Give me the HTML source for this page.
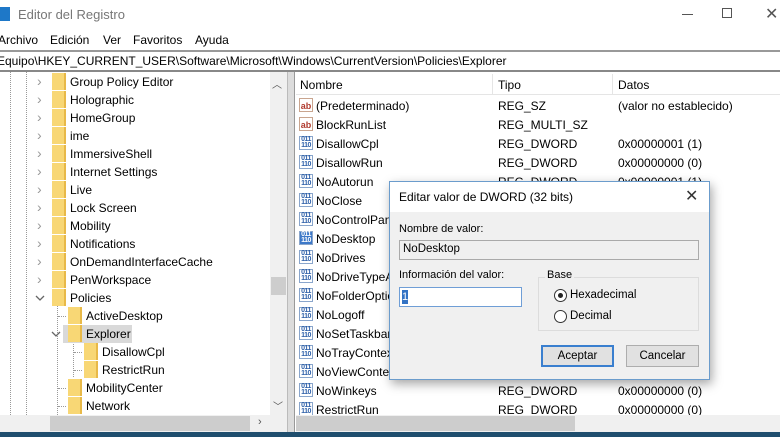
<!DOCTYPE html><html><head><style>
*{margin:0;padding:0;box-sizing:border-box}
body{width:780px;height:437px;overflow:hidden;background:#fff;font-family:"Liberation Sans",sans-serif;font-size:12px;color:#000;position:relative}
.a{position:absolute;white-space:nowrap}
.fold{position:absolute;width:14px;height:17px;background:#f8d775;border-right:2px solid #e8b948}
.chev{position:absolute;font-size:14px;color:#999}
.ic{position:absolute;width:14px;height:14px;font-size:9px;line-height:14px;text-align:center;font-weight:bold}
.ab{color:#b03a2e;border:1px solid #c9a58f;background:#fff}
.dw{color:#2d5fa8;border:1px solid #8aa6cc;background:#fff;font-size:7px;line-height:6px;letter-spacing:-0.5px}
</style></head><body>
<div class="a" style="left:0;top:7px;width:10px;height:14px;background:#1e78c8"></div>
<div class="a" style="left:18px;top:7px;font-size:13px;color:#777">Editor del Registro</div>
<div class="a" style="left:682px;top:14px;width:11px;height:1px;background:#555"></div>
<div class="a" style="left:722px;top:8px;width:10px;height:10px;border:1px solid #555"></div>
<div class="a" style="left:765px;top:4px;font-size:16px;color:#555">✕</div>
<div class="a" style="left:-2px;top:33px">Archivo</div>
<div class="a" style="left:50px;top:33px">Edición</div>
<div class="a" style="left:103px;top:33px">Ver</div>
<div class="a" style="left:133px;top:33px">Favoritos</div>
<div class="a" style="left:195px;top:33px">Ayuda</div>
<div class="a" style="left:0;top:50px;width:780px;height:2px;background:#999"></div>
<div class="a" style="left:-3px;top:54px;font-size:12px">Equipo\HKEY_CURRENT_USER\Software\Microsoft\Windows\CurrentVersion\Policies\Explorer</div>
<div class="a" style="left:0;top:70px;width:780px;height:2px;background:#888"></div>
<div class="a" style="left:10px;top:72px;height:343px;border-left:1px dotted #999"></div>
<div class="a" style="left:26px;top:72px;height:343px;border-left:1px dotted #999"></div>
<div class="a" style="left:57px;top:305px;height:110px;border-left:1px dotted #999"></div>
<div class="a" style="left:73px;top:341px;height:36px;border-left:1px dotted #999"></div>
<div id="tree"></div>
<div class="a" style="left:270px;top:72px;width:17px;height:343px;background:#f0f0f0"></div>
<div class="a" style="left:272px;top:76px;font-size:10px;color:#555">︿</div>
<div class="a" style="left:271px;top:277px;width:15px;height:18px;background:#cdcdcd"></div>
<div class="a" style="left:273px;top:398px;font-size:10px;color:#555">﹀</div>
<div class="a" style="left:0;top:415px;width:287px;height:17px;background:#f0f0f0"></div>
<div class="a" style="left:50px;top:416px;width:200px;height:15px;background:#cdcdcd"></div>
<div class="a" style="left:258px;top:416px;font-size:11px;color:#555">›</div>
<div class="a" style="left:287px;top:72px;width:8px;height:360px;background:#dcdcdc;border-left:1px solid #bbb;border-right:1px solid #999"></div>
<div class="a" style="left:296px;top:73px;width:484px;height:22px;border-bottom:1px solid #e5e5e5"></div>
<div class="a" style="left:300px;top:78px">Nombre</div>
<div class="a" style="left:492px;top:74px;height:20px;border-left:1px solid #e5e5e5"></div>
<div class="a" style="left:498px;top:78px">Tipo</div>
<div class="a" style="left:612px;top:74px;height:20px;border-left:1px solid #e5e5e5"></div>
<div class="a" style="left:618px;top:78px">Datos</div>
<div id="list"></div>
<div class="a" style="left:296px;top:415px;width:484px;height:17px;background:#f0f0f0"></div>
<div class="a" style="left:296px;top:416px;width:279px;height:15px;background:#cdcdcd"></div>
<div class="a" style="left:0;top:432px;width:780px;height:5px;background:#1f4e6e"></div>
<div class="a" style="left:389px;top:181px;width:321px;height:199px;background:#f0f0f0;border:1px solid #6b9ccc;box-shadow:2px 4px 10px rgba(0,0,0,.35)">
 <div class="a" style="left:0;top:0;width:319px;height:30px;background:#fff"></div>
 <div class="a" style="left:9px;top:8px">Editar valor de DWORD (32 bits)</div>
 <div class="a" style="left:295px;top:4px;font-size:16px;color:#333">✕</div>
 <div class="a" style="left:9px;top:41px;font-size:11px">Nombre de valor:</div>
 <div class="a" style="left:9px;top:58px;width:300px;height:20px;border:1px solid #aaa;background:#f0f0f0;padding:2px 3px;font-size:11.5px">NoDesktop</div>
 <div class="a" style="left:9px;top:87px;font-size:11px">Información del valor:</div>
 <div class="a" style="left:9px;top:105px;width:123px;height:20px;border:1px solid #6f9ed6;background:#fff"></div>
 <div class="a" style="left:12px;top:108px;width:6px;height:14px;background:#3373c4;color:#fff;font-size:11px;line-height:14px">1</div>
 <div class="a" style="left:148px;top:95px;width:161px;height:54px;border:1px solid #dcdcdc"></div>
 <div class="a" style="left:155px;top:87px;font-size:11px;background:#f0f0f0;padding:0 2px">Base</div>
 <div class="a" style="left:164px;top:107px;width:13px;height:13px;border:1px solid #333;border-radius:50%;background:#fff"></div>
 <div class="a" style="left:168px;top:111px;width:5px;height:5px;border-radius:50%;background:#222"></div>
 <div class="a" style="left:180px;top:107px;font-size:11.5px">Hexadecimal</div>
 <div class="a" style="left:164px;top:128px;width:13px;height:13px;border:1px solid #333;border-radius:50%;background:#fff"></div>
 <div class="a" style="left:180px;top:128px;font-size:11.5px">Decimal</div>
 <div class="a" style="left:151px;top:163px;width:73px;height:22px;border:2px solid #3a7fcf;background:#e1e1e1;text-align:center;line-height:18px;font-size:11.5px">Aceptar</div>
 <div class="a" style="left:236px;top:163px;width:73px;height:22px;border:1px solid #adadad;background:#e1e1e1;text-align:center;line-height:20px;font-size:11.5px">Cancelar</div>
</div>
<script>
var t=[["Group Policy Editor",1,">"],["Holographic",1,">"],["HomeGroup",1,">"],["ime",1,">"],["ImmersiveShell",1,">"],["Internet Settings",1,">"],["Live",1,">"],["Lock Screen",1,">"],["Mobility",1,">"],["Notifications",1,">"],["OnDemandInterfaceCache",1,">"],["PenWorkspace",1,">"],["Policies",1,"v"],["ActiveDesktop",2,""],["Explorer",2,"v"],["DisallowCpl",3,""],["RestrictRun",3,""],["MobilityCenter",2,""],["Network",2,""]];
var h="";t.forEach(function(r,i){var y=73+i*18,fx=52+(r[1]-1)*16;
if(r[0]=="Explorer")h+='<div class="a" style="left:63px;top:'+(y)+'px;width:69px;height:18px;background:#d9d9d9"></div>';
if(r[2]==">")h+='<div class="chev" style="left:'+(fx-15)+'px;top:'+(y)+'px">&#x203A;</div>';
if(r[2]=="v")h+='<svg class="a" style="left:'+(fx-17)+'px;top:'+(y+6)+'px" width="10" height="6"><path d="M1 1L5 5L9 1" stroke="#666" stroke-width="1.3" fill="none"/></svg>';
if(r[2]=="")h+='<div class="a" style="left:'+(fx-10)+'px;top:'+(y+9)+'px;width:8px;border-top:1px dotted #999"></div>';
h+='<div class="fold" style="left:'+fx+'px;top:'+(y)+'px"></div><div class="a" style="left:'+(fx+18)+'px;top:'+(y+2)+'px">'+r[0]+'</div>';});
document.getElementById("tree").innerHTML=h;
var l=[["(Predeterminado)","REG_SZ","(valor no establecido)",1],["BlockRunList","REG_MULTI_SZ","",1],["DisallowCpl","REG_DWORD","0x00000001 (1)"],["DisallowRun","REG_DWORD","0x00000000 (0)"],["NoAutorun","REG_DWORD","0x00000001 (1)"],["NoClose"],["NoControlPanel"],["NoDesktop"],["NoDrives"],["NoDriveTypeAutoRun"],["NoFolderOptions"],["NoLogoff"],["NoSetTaskbar"],["NoTrayContextMenu"],["NoViewContextMenu"],["NoWinkeys","REG_DWORD","0x00000000 (0)"],["RestrictRun","REG_DWORD","0x00000000 (0)"]];
h="";l.forEach(function(r,i){var y=97+i*19;
h+=r[3]?'<div class="ic ab" style="left:299px;top:'+(y+1)+'px">ab</div>':'<div class="ic dw" style="left:299px;top:'+(y+1)+'px;'+(r[0]=="NoDesktop"?'background:#3d78c8;color:#fff':'')+'">011<br>110</div>';
h+='<div class="a" style="left:316px;top:'+(y+2)+'px">'+r[0]+'</div>';
if(r[1])h+='<div class="a" style="left:498px;top:'+(y+2)+'px">'+r[1]+'</div><div class="a" style="left:618px;top:'+(y+2)+'px">'+r[2]+'</div>';});
document.getElementById("list").innerHTML=h;
</script>
</body></html>
